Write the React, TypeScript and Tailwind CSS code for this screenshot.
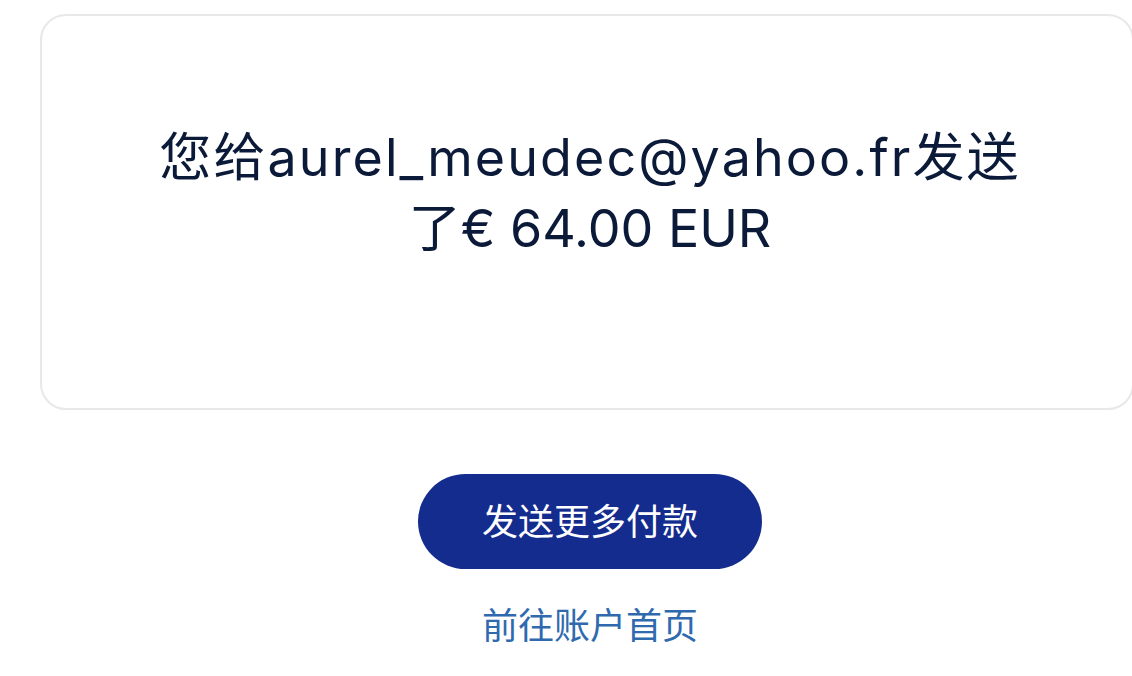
export default function App() {
  return (
    <div className="min-h-screen bg-white pt-[14px] font-['Inter','Noto_Sans_CJK_SC',sans-serif]">
      {/* Confirmation card */}
      <div className="ml-[40px] -mr-[2px] h-[396px] rounded-[26px] border-2 border-[#e8e8ea] flex justify-center pt-[106px] pl-[6px]">
        <h1 className="text-center text-[52px] leading-[71px] text-[#0b1a38] font-normal">
          <span className="tracking-[2.1px]">您给aurel_meudec@yahoo.fr发送</span>
          <br />
          了€ 64.00 EUR
        </h1>
      </div>

      <div className="flex flex-col items-center mt-[64px] pl-[48px]">
        <button className="w-[344px] h-[95px] rounded-full bg-[#142c8e] text-white text-[36px]">
          发送更多付款
        </button>
        <a href="#" className="mt-[32px] text-[36px] leading-[50px] text-[#2f6aae]">
          前往账户首页
        </a>
      </div>
    </div>
  );
}
